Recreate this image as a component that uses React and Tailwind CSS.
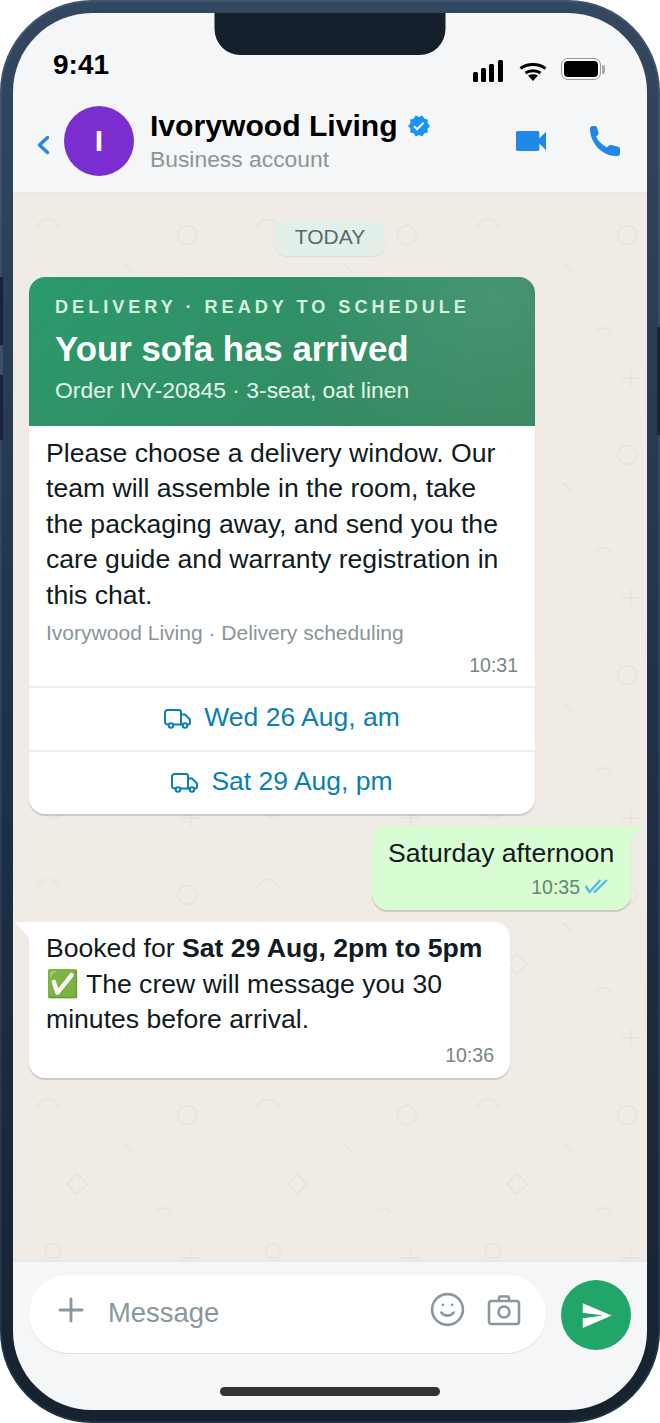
import React from 'react';
import { Plus, Smile } from 'lucide-react';

const SignalIcon = () => (
  <svg width="31" height="23" viewBox="0 0 31 23" fill="#000">
    <rect x="0" y="12" width="5" height="10" rx="1.5" />
    <rect x="8" y="8" width="5" height="14" rx="1.5" />
    <rect x="16" y="4" width="5" height="18" rx="1.5" />
    <rect x="25" y="0" width="5" height="22" rx="1.5" />
  </svg>
);

const WifiIcon = () => (
  <svg width="28" height="19" viewBox="0 0 28 19" fill="none">
    <path d="M1.500 6.500C8 1 20 1 26.500 6.500" stroke="#000" strokeWidth="3" />
    <path d="M6.500 11C10.500 8 17.500 8 21.500 11" stroke="#000" strokeWidth="3" />
    <path d="M9 13.500L14 19L19 13.500C16 11.800 12 11.800 9 13.500Z" fill="#000" />
  </svg>
);

const VerifiedIcon = () => (
  <svg width="24" height="24" viewBox="0 0 24 24" fill="#1a94f0">
    <path d="M23 12l-2.44-2.79.34-3.69-3.61-.82-1.89-3.2L12 2.96 8.6 1.5 6.71 4.69 3.1 5.5l.34 3.7L1 12l2.44 2.79-.34 3.7 3.61.82L8.6 22.5l3.4-1.47 3.4 1.46 1.89-3.19 3.61-.82-.34-3.69L23 12zm-12.91 4.72l-3.8-3.81 1.48-1.48 2.32 2.33 5.85-5.87 1.48 1.48-7.33 7.35z" />
  </svg>
);

const VideoIcon = () => (
  <svg width="40" height="40" viewBox="0 0 24 24" fill="#1f88e8">
    <path d="M17 10.5V7c0-.55-.45-1-1-1H4c-.55 0-1 .45-1 1v10c0 .55.45 1 1 1h12c.55 0 1-.45 1-1v-3.5l4 4v-11l-4 4z" />
  </svg>
);

const PhoneIcon = () => (
  <svg width="32" height="32" viewBox="0 0 32 32" fill="#1f88e8">
    <path d="M1 3.500C1 2 2 1 3.500 1H6C7 1 7.600 1.500 8 2.500L9.500 8C9.700 9 9.200 9.800 8.400 10.400L7 11.500C9 16 13 20 18 22.500L19.600 20.800C20.300 20 21 19.700 22 20L28.500 21.600C29.700 21.900 31 22.600 31 24V28C31 30 30 31 28.500 31H27C13 31 1 18 1 3.500Z" />
  </svg>
);

const CameraIcon = () => (
  <svg width="34" height="32" viewBox="0 0 34 32" fill="none" stroke="#8a979e" strokeWidth="2.600" strokeLinejoin="round">
    <path d="M4.500 7H29.500C31 7 32 8 32 9.500V27.500C32 29 31 30 29.500 30H4.500C3 30 2 29 2 27.500V9.500C2 8 3 7 4.500 7Z" />
    <path d="M11.500 7L12.500 2.500H21.500L22.500 7" />
    <circle cx="17" cy="18" r="5.500" />
  </svg>
);

const SendIcon = () => (
  <svg width="33" height="33" viewBox="0 0 24 24" fill="#fff">
    <path d="M2 21l21-9L2 3v7l15 2-15 2z" />
  </svg>
);

const DoubleTick = () => (
  <svg width="23" height="15" viewBox="0 0 23 15" fill="none" stroke="#5ab8e8" strokeWidth="2.400">
    <path d="M0.500 7L4.500 13L15.500 1" />
    <path d="M9 13.500L21.800 1" />
  </svg>
);

const TruckIcon = () => (
  <svg width="27" height="20" viewBox="0 0 27 20" fill="none" stroke="currentColor" strokeWidth="2" strokeLinecap="round" strokeLinejoin="round">
    <path d="M4.500 15.500H3.500A2.500 2.500 0 0 1 1 13V3.500A2.500 2.500 0 0 1 3.500 1H15A2 2 0 0 1 17 3V15.500H9.500" />
    <path d="M17 5.500H21L26 10.500V13.500A2 2 0 0 1 24 15.500H23.500" />
    <path d="M17 15.500H18.500" />
    <circle cx="7" cy="16.500" r="2.300" />
    <circle cx="21" cy="16.500" r="2.300" />
  </svg>
);

// wallpaper tile, 220px square
const ChatPattern = () => (
  <svg className="absolute inset-0 w-full h-full" aria-hidden="true">
    <defs>
      <pattern id="wall" width="220" height="220" patternUnits="userSpaceOnUse">
        <g fill="none" stroke="#e8e3db" strokeWidth="1.800">
          <path d="M23.500 34A12 12 0 0 1 46.500 34" />
          <circle cx="174" cy="41" r="9.500" />
          <path d="M109 70A11 11 0 0 1 118 79" />
          <path d="M64 100L74 110L64 120L54 110Z" />
          <path d="M143 138A8 8 0 0 1 157 138" />
          <circle cx="40" cy="177" r="7.500" />
          <path d="M168.500 184H186.500M177.500 175V193" />
        </g>
      </pattern>
    </defs>
    <rect width="100%" height="100%" fill="url(#wall)" />
  </svg>
);

const TimeStamp = ({ children, className = '' }) => (
  <span className={`text-[19.500px] leading-[24px] ${className}`}>{children}</span>
);

const ChoiceRow = ({ label }) => (
  <div className="h-[64px] border-t-[2px] border-[#eeeeee] flex items-center justify-center gap-[13px] text-[26.500px] text-[#0b7fb3]">
    <TruckIcon />
    <span className="-mt-[3px]">{label}</span>
  </div>
);

export default function App() {
  return (
    <div className="w-[660px] h-[1423px] bg-white font-['Liberation_Sans',Arial,sans-serif]">
      <div className="relative w-full h-full rounded-[92px] bg-gradient-to-b from-[#3f5671] via-[#2b405a] to-[#1f3146] p-[2px]">
        {/* side buttons */}
        <div className="absolute left-0 top-[277px] w-[3px] h-[68px] bg-[#172536]" />
        <div className="absolute left-0 top-[345px] w-[3px] h-[30px] bg-[#3a4f68]" />
        <div className="absolute left-0 top-[375px] w-[3px] h-[65px] bg-[#172536]" />
        <div className="absolute right-0 top-[327px] w-[3px] h-[108px] bg-[#172536]" />

        <div className="w-full h-full rounded-[90px] bg-gradient-to-b from-[#33485f] via-[#20324a] to-[#17222f] p-[11px]">
          <div className="relative w-full h-full rounded-[79px] overflow-hidden bg-[#f5f6f7] flex flex-col">
            {/* notch */}
            <div className="absolute left-1/2 -translate-x-1/2 top-0 w-[231px] h-[42px] bg-[#16202c] rounded-b-[26px]" />

            {/* status bar */}
            <div className="h-[82px] shrink-0 pl-[40px] pr-[42px] pt-[34px] flex items-start justify-between">
              <span className="text-[28px] leading-[36px] font-bold text-black">9:41</span>
              <div className="flex items-center gap-[15px] mt-[11px]">
                <SignalIcon />
                <WifiIcon />
                <div className="flex items-center gap-[1px] -ml-[1px] mb-[4px]">
                  <div className="w-[40px] h-[22px] rounded-[7px] border-[1.5px] border-[#999999] p-[2px]">
                    <div className="w-full h-full rounded-[4px] bg-black" />
                  </div>
                  <div className="w-[3px] h-[9px] rounded-r-[2px] bg-[#aaaaaa]" />
                </div>
              </div>
            </div>

            {/* header */}
            <div className="h-[99px] shrink-0 border-b-[2px] border-[#e7e8e8] flex items-start pl-[23px] pr-[26px] pt-[11px]">
              <svg className="mt-[29px] mr-[14px]" width="14" height="20" viewBox="0 0 14 20" fill="none" stroke="#1f88e8" strokeWidth="3.400" strokeLinecap="round" strokeLinejoin="round">
                <path d="M11.500 2.500L3.500 10L11.500 17.500" />
              </svg>
              <div className="w-[70px] h-[70px] rounded-full bg-[#7b2ed0] text-white font-bold text-[30px] flex items-center justify-center pb-[2px]">I</div>
              <div className="ml-[16px] flex-1">
                <div className="flex items-center gap-[9px] mt-[1px]">
                  <span className="text-[30.120px] leading-[38px] font-bold text-black">Ivorywood Living</span>
                  <VerifiedIcon />
                </div>
                <div className="text-[22.850px] leading-[29px] text-[#8a9599]">Business account</div>
              </div>
              <div className="flex items-center gap-[38px] mt-[15px]">
                <VideoIcon />
                <PhoneIcon />
              </div>
            </div>

            {/* chat */}
            <div className="relative flex-1 bg-[#f0ebe4]">
              <ChatPattern />
              <div className="relative flex flex-col px-[16px] pt-[26px]">
                <div className="self-center w-[110px] h-[36px] pb-[2px] rounded-[12px] bg-[#e3f0e9] shadow-[0_1px_1px_rgba(0,0,0,0.08)] flex items-center justify-center text-[21px] text-[#5a6a6a]">
                  TODAY
                </div>

                {/* delivery card */}
                <div className="mt-[21px] w-[506px] rounded-[16px] bg-white shadow-[0_2px_1px_rgba(0,0,0,0.15)] overflow-hidden">
                  <div className="h-[149px] pl-[26px] pt-[18px] bg-[radial-gradient(circle_at_92%_15%,rgba(255,255,255,0.09),rgba(255,255,255,0)_40%),linear-gradient(135deg,#2b9a6b,#37855f)]">
                    <div className="text-[18.150px] leading-[24px] font-bold tracking-[3.970px] text-[#d3f0dd]">DELIVERY · READY TO SCHEDULE</div>
                    <div className="mt-[9px] text-[34.850px] leading-[42px] font-bold text-white">Your sofa has arrived</div>
                    <div className="mt-[5px] text-[22.900px] leading-[30px] text-[#e4f5ea]">Order IVY-20845 · 3-seat, oat linen</div>
                  </div>
                  <div className="pl-[17px] pr-[17px] pt-[9.500px] h-[260px]">
                    <p className="pr-[12px] text-[26.600px] leading-[35.640px] text-[#111b21]">
                      Please choose a delivery window. Our team will assemble in the room, take the packaging away, and send you the care guide and warranty registration in this chat.
                    </p>
                    <div className="mt-[5.500px] text-[21.040px] leading-[28px] text-[#8a9599]">Ivorywood Living · Delivery scheduling</div>
                    <div className="mt-[6px] text-right"><TimeStamp className="text-[#7a8585]">10:31</TimeStamp></div>
                  </div>
                  <ChoiceRow label="Wed 26 Aug, am" />
                  <ChoiceRow label="Sat 29 Aug, pm" />
                </div>

                {/* sent */}
                <div className="relative mt-[12px] self-end w-[259px] h-[84px] rounded-[16px] rounded-tr-none bg-[#d9fdd3] shadow-[0_2px_1px_rgba(0,0,0,0.15)] px-[16px] pt-[10px]">
                  <div className="absolute -right-[11px] top-0 w-[11px] h-[13px] bg-[#d9fdd3] [clip-path:polygon(0_0,100%_0,0_100%)]" />
                  <div className="text-[26.600px] leading-[35.640px] text-[#111b21]">Saturday afternoon</div>
                  <div className="flex items-center justify-end gap-[5px] pr-[7px] mt-[3px]">
                    <TimeStamp className="text-[#5f8a6e]">10:35</TimeStamp>
                    <DoubleTick />
                  </div>
                </div>

                {/* received */}
                <div className="relative mt-[12px] w-[481px] h-[156px] rounded-[16px] rounded-tl-none bg-white shadow-[0_2px_1px_rgba(0,0,0,0.15)] pl-[17px] pr-[16px] pt-[9px]">
                  <div className="absolute -left-[14px] top-0 w-[14px] h-[16px] bg-white [clip-path:polygon(0_0,100%_0,100%_100%)]" />
                  <p className="text-[26.600px] leading-[35.640px] text-[#111b21]">
                    Booked for <b>Sat 29 Aug, 2pm to 5pm</b><br />
                    ✅ The crew will message you 30<br />
                    minutes before arrival.
                  </p>
                  <div className="mt-[5px] text-right"><TimeStamp className="text-[#7a8585]">10:36</TimeStamp></div>
                </div>
              </div>
            </div>

            {/* composer */}
            <div className="h-[150px] shrink-0 border-t-[2px] border-[#e7e8e8] px-[16px] pt-[13px] flex flex-col items-center">
              <div className="w-full flex items-center gap-[15px]">
                <div className="flex-1 h-[78px] rounded-full bg-white shadow-[0_1px_1px_rgba(0,0,0,0.1)] flex items-center pl-[23px] pr-[25px]">
                  <Plus size={38} strokeWidth={1.8} color="#8a979e" className="-mt-[9px]" />
                  <span className="ml-[18px] flex-1 text-[27.400px] text-[#8a979e] -mt-[2px]">Message</span>
                  <Smile size={37} strokeWidth={1.7} color="#8a979e" className="-mt-[9px]" />
                  <div className="ml-[21px] -mt-[9px]"><CameraIcon /></div>
                </div>
                <div className="w-[70px] h-[70px] rounded-full bg-[#22a568] flex items-center justify-center mt-[2px]">
                  <SendIcon />
                </div>
              </div>
              <div className="mt-[34px] w-[220px] h-[9px] rounded-full bg-[#333333]" />
            </div>
          </div>
        </div>
      </div>
    </div>
  );
}
